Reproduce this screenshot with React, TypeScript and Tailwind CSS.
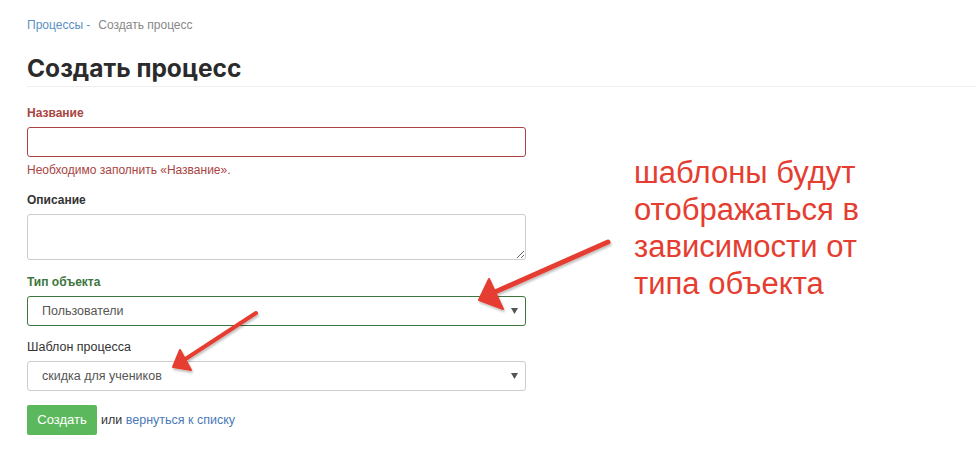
import React from 'react';

function Caret() {
  return (
    <svg width="7" height="6" viewBox="0 0 7 6" className="shrink-0">
      <path d="M0 0 H7 L3.5 6 Z" fill="#555" />
    </svg>
  );
}

function FakeSelect({ value, border }: { value: string; border: string }) {
  return (
    <div
      className={`mt-[5px] flex h-[30px] items-center justify-between rounded-[3px] border bg-white pl-[14px] pr-[7px] text-[12.5px] text-[#555] ${border}`}
    >
      <span>{value}</span>
      <Caret />
    </div>
  );
}

function Arrows() {
  return (
    <svg className="pointer-events-none absolute left-0 top-0" width="976" height="457">
      <defs>
        <filter id="sh" x="-10%" y="-10%" width="120%" height="120%">
          <feDropShadow dx="1" dy="2" stdDeviation="1" floodColor="#000" floodOpacity="0.25" />
        </filter>
      </defs>
      <g fill="#e53d30" stroke="#e53d30" strokeLinecap="round" strokeLinejoin="round" filter="url(#sh)">
        <path d="M608 242 L495 292" strokeWidth="5" fill="none" />
        <path d="M479 300 L489 279 L503 309 Z" strokeWidth="2" />
        <path d="M256 313 L184 360" strokeWidth="4" fill="none" />
        <path d="M173 367 L180 350 L191 370 Z" strokeWidth="2" />
      </g>
    </svg>
  );
}

export default function App() {
  return (
    <div className="relative h-[457px] w-[976px] overflow-hidden bg-white font-['Liberation_Sans',Arial,sans-serif] text-[12px] text-[#333]">
      <div className="pl-[27px] pt-[17px]">
        <div className="h-[17px] leading-[17px] text-[12px]">
          <span className="text-[#5a8fc6]">Процессы -</span>
          <span className="ml-[8px] text-[#888]">Создать процесс</span>
        </div>

        <h1 className="mt-[19px] border-b border-[#eee] pb-[3px] font-['Inter',sans-serif] text-[24.5px] font-bold leading-[30px] text-[#2b2b2b]">
          Создать процесс
        </h1>

        <div className="flex">
          <form className="w-[499px]">
            <label className="mt-[18px] block h-[17px] leading-[17px] font-bold text-[#a94442]">Название</label>
            <input className="mt-[5px] block h-[30px] w-full rounded-[3px] border border-[#a94442] bg-white outline-none" />
            <div className="mt-[5px] h-[17px] leading-[17px] text-[#a94442]">Необходимо заполнить «Название».</div>

            <label className="mt-[13px] block h-[17px] leading-[17px] font-bold">Описание</label>
            <textarea className="mt-[5px] block h-[46px] w-full rounded-[3px] border border-[#ccc] bg-white outline-none" />

            <label className="mt-[14px] block h-[17px] leading-[17px] font-bold text-[#3c763d]">Тип объекта</label>
            <FakeSelect value="Пользователи" border="border-[#3c763d]" />

            <label className="mt-[13px] block h-[17px] leading-[17px] text-[12.5px]">Шаблон процесса</label>
            <FakeSelect value="скидка для учеников" border="border-[#ccc]" />

            <div className="mt-[14px] flex items-center">
              <button type="button" className="h-[30px] w-[70px] rounded-[2px] bg-[#5cb85c] text-[13px] text-white">
                Создать
              </button>
              <span className="ml-[4px] text-[12.5px]">
                или <span className="text-[#4a7ab8]">вернуться к списку</span>
              </span>
            </div>
          </form>

          <div className="ml-[108px] mt-[67px] text-[31px] leading-[37px] text-[#e53d30]">
            шаблоны будут
            <br />
            отображаться в
            <br />
            зависимости от
            <br />
            типа объекта
          </div>
        </div>
      </div>
      <Arrows />
    </div>
  );
}
